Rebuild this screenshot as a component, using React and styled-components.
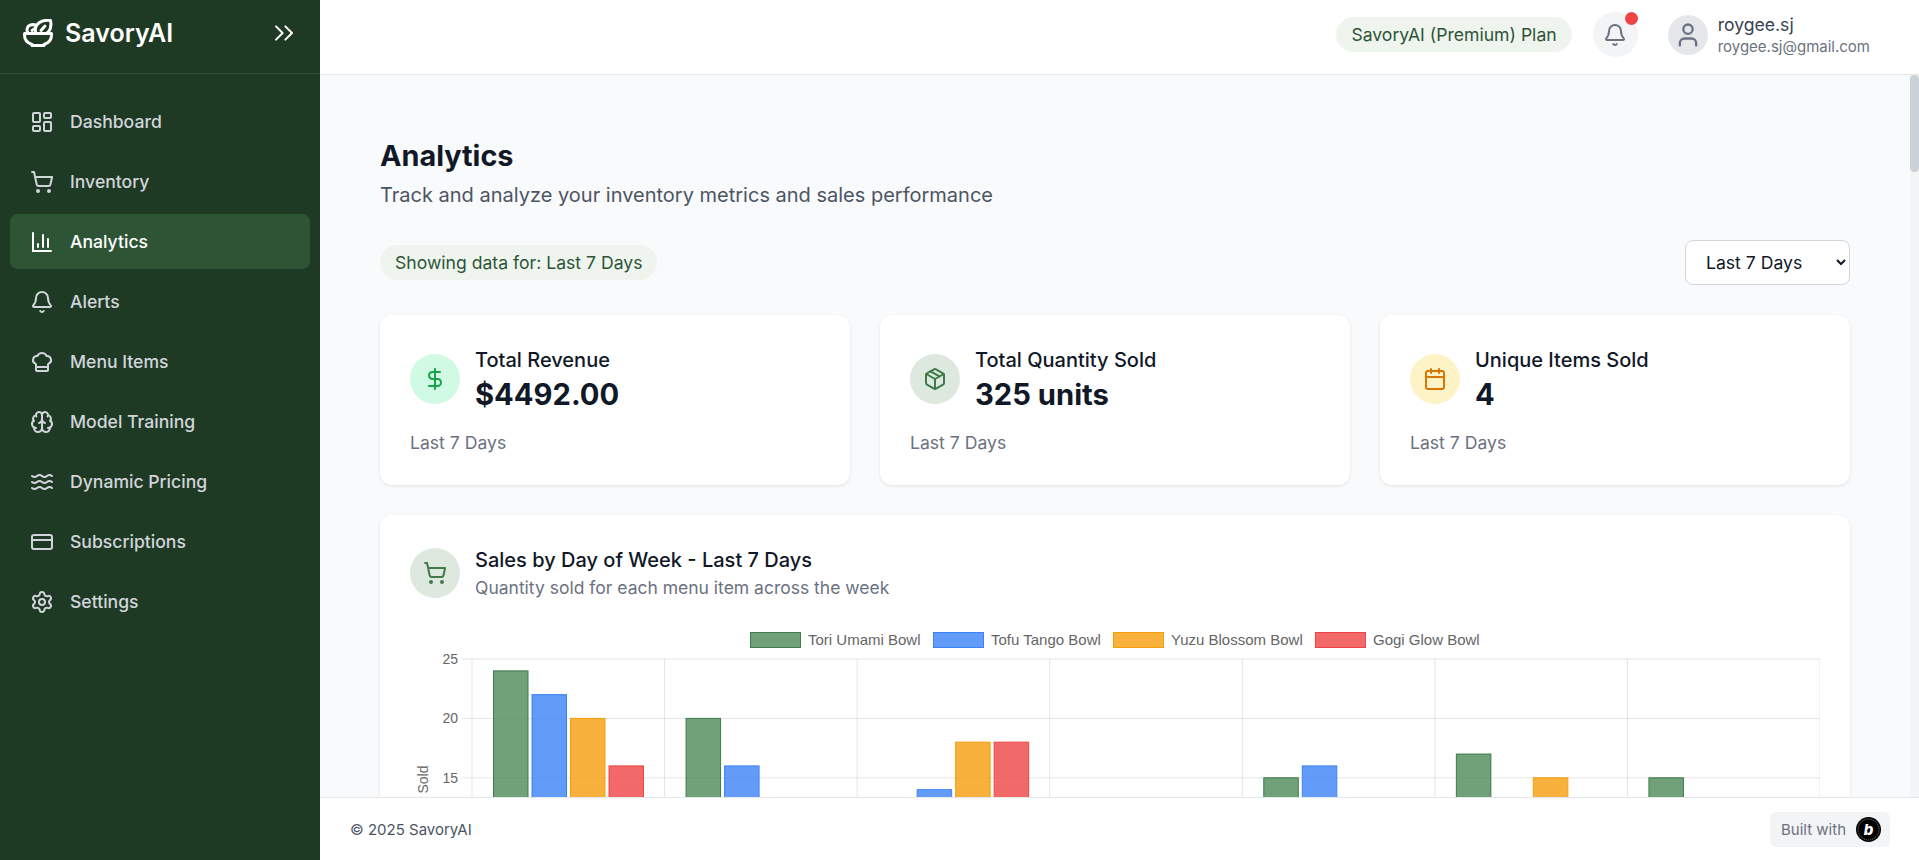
import styled, { createGlobalStyle } from "styled-components";
import {
  Bell,
  Brain,
  Calendar,
  ChefHat,
  ChevronsRight,
  CreditCard,
  DollarSign,
  LayoutDashboard,
  Package,
  Settings,
  ShoppingCart,
  User,
  Waves,
} from "lucide-react";

const GlobalStyle = createGlobalStyle`
  * {
    box-sizing: border-box;
  }
  html, body {
    margin: 0;
    height: 100%;
    overflow: hidden;
    font-family: Inter, "Liberation Sans", sans-serif;
    color: #111827;
  }
`;

const Shell = styled.div`
  display: flex;
  height: 100vh;
`;

const Sidebar = styled.aside`
  flex: 0 0 320px;
  background: #1f3a24;
  display: flex;
  flex-direction: column;
`;

const Brand = styled.div`
  height: 74px;
  flex: none;
  display: flex;
  align-items: center;
  padding: 0 20px 7px 23px;
  border-bottom: 1px solid #2d5535;
  color: #fff;
`;

const BrandName = styled.span`
  font-size: 25px;
  font-weight: 600;
  margin-left: 12px;
  flex: 1;
`;

const Nav = styled.nav`
  display: flex;
  flex-direction: column;
  gap: 5px;
  padding: 20px 10px;
`;

const NavItem = styled.a`
  height: 55px;
  display: flex;
  align-items: center;
  gap: 16px;
  padding: 0 20px;
  border-radius: 8px;
  font-size: 17.6px;
  font-weight: 500;
  color: ${(p) => (p.$active ? "#fff" : "#d1d5db")};
  background: ${(p) => (p.$active ? "#2d5535" : "transparent")};
`;

const Right = styled.div`
  flex: 1;
  min-width: 0;
  display: flex;
  flex-direction: column;
`;

const Topbar = styled.header`
  height: 75px;
  flex: none;
  background: #fff;
  border-bottom: 1px solid #e5e7eb;
  display: flex;
  align-items: center;
  justify-content: flex-end;
  padding: 0 49px 5px 0;
`;

const PlanPill = styled.div`
  height: 35px;
  padding: 0 15px;
  display: flex;
  align-items: center;
  border-radius: 18px;
  background: #eff4ef;
  color: #2d5535;
  font-size: 17.6px;
`;

const BellButton = styled.div`
  position: relative;
  width: 45px;
  height: 45px;
  margin: 0 30px 0 21px;
  border-radius: 50%;
  background: #f3f4f6;
  color: #6b7280;
  display: flex;
  align-items: center;
  justify-content: center;
`;

const RedDot = styled.span`
  position: absolute;
  top: 0;
  right: 0;
  width: 13px;
  height: 13px;
  border-radius: 50%;
  background: #ef4444;
`;

const Avatar = styled.div`
  width: 40px;
  height: 40px;
  border-radius: 50%;
  background: #e5e7eb;
  color: #6b7280;
  display: flex;
  align-items: center;
  justify-content: center;
  margin-right: 10px;
`;

const UserInfo = styled.div`
  display: flex;
  flex-direction: column;
  gap: 2px;
  padding-top: 3px;
`;

const UserName = styled.span`
  font-size: 17.6px;
  line-height: 20px;
  color: #374151;
`;

const UserEmail = styled.span`
  font-size: 15px;
  line-height: 20px;
  color: #6b7280;
`;

const MainRow = styled.div`
  flex: 1;
  min-height: 0;
  display: flex;
`;

const Main = styled.main`
  flex: 1;
  min-width: 0;
  overflow: hidden;
  background: #f9fafb;
`;

const ScrollRail = styled.div`
  flex: 0 0 9px;
  background: #f3f4f6;
`;

const ScrollThumb = styled.div`
  height: 97px;
  border-radius: 5px;
  background: #cbd0d9;
`;

const Content = styled.div`
  padding: 63px 60px 60px;
`;

const Title = styled.h1`
  margin: 0;
  font-size: 28.8px;
  line-height: 36px;
  font-weight: 700;
  color: #111827;
`;

const Subtitle = styled.p`
  margin: 7px 0 0;
  font-size: 20px;
  line-height: 28px;
  color: #4b5563;
`;

const Toolbar = styled.div`
  margin-top: 31px;
  display: flex;
  align-items: center;
  justify-content: space-between;
`;

const RangePill = styled.div`
  height: 35px;
  padding: 0 15px;
  display: flex;
  align-items: center;
  border-radius: 18px;
  background: #eff4ef;
  color: #2d5535;
  font-size: 17.6px;
`;

const RangeSelect = styled.select`
  width: 165px;
  height: 45px;
  padding: 0 16px;
  border: 1px solid #d1d5db;
  border-radius: 8px;
  background: #fff;
  color: #111827;
  font-family: inherit;
  font-size: 17.6px;
`;

const StatGrid = styled.div`
  margin-top: 30px;
  display: grid;
  grid-template-columns: repeat(3, 1fr);
  gap: 30px;
`;

const Card = styled.section`
  background: #fff;
  border-radius: 12px;
  padding: 30px;
  box-shadow: 0 1px 3px rgba(0, 0, 0, 0.1);
`;

const CardHead = styled.div`
  display: flex;
  align-items: center;
  gap: 15px;
`;

const IconCircle = styled.div`
  width: 50px;
  height: 50px;
  flex: none;
  border-radius: 50%;
  display: flex;
  align-items: center;
  justify-content: center;
  background: ${(p) => p.$bg};
  color: ${(p) => p.$fg};
`;

const StatLabel = styled.div`
  font-size: 20px;
  line-height: 28px;
  font-weight: 500;
  margin-top: 1px;
`;

const StatValue = styled.div`
  font-size: 29.2px;
  line-height: 36px;
  font-weight: 700;
  margin-top: 3px;
`;

const StatNote = styled.div`
  margin-top: 18px;
  font-size: 17.6px;
  line-height: 24px;
  color: #6b7280;
`;

const ChartCard = styled(Card)`
  margin-top: 30px;
`;

const ChartTitle = styled.div`
  font-size: 20px;
  line-height: 30px;
  font-weight: 500;
`;

const ChartSub = styled.div`
  font-size: 17.5px;
  line-height: 26px;
  color: #6b7280;
`;

const ChartSvg = styled.svg`
  display: block;
  margin-top: 20px;
`;

const Footer = styled.footer`
  height: 63px;
  flex: none;
  background: #fff;
  border-top: 1px solid #e5e7eb;
  display: flex;
  align-items: center;
  justify-content: space-between;
  padding: 1px 29px 0 30px;
  font-size: 15px;
  color: #4b5563;
`;

const BuiltWith = styled.div`
  height: 35px;
  padding: 0 9px 0 11px;
  display: flex;
  align-items: center;
  gap: 10px;
  border-radius: 6px;
  background: #f3f4f6;
  color: #6b7280;
`;

function BarsIcon(props) {
  return (
    <svg width="24" height="24" viewBox="0 0 24 24" fill="none" stroke="currentColor" strokeWidth="2" strokeLinecap="round" {...props}>
      <path d="M3 3v18h18" />
      <path d="M18 17V9" />
      <path d="M13 17V5" />
      <path d="M8 17v-3" />
    </svg>
  );
}

function BowlLogo() {
  return (
    <svg width="30" height="28" viewBox="0 0 30 28" fill="none" stroke="#fff" strokeWidth="3" strokeLinejoin="round" strokeLinecap="round" style={{ flex: "none" }}>
      <path d="M1.5 14.5h27v1.5c0 4.5-3 8-7.5 9.5v1H9v-1C4.5 24 1.5 20.5 1.5 16z" />
      <path d="M5 14c-2-3-1-7 2.5-8 2-.6 4-.4 5.5.4" />
      <path d="M13 14c-1.500-4 0-8 3.500-10.500 3-2 7-2.500 11-2 .8 4 .4 8-1.500 10.500-.6 1-1.300 1.500-2 2" />
      <path d="M9 11.5l3-2M18 11.5l4-4.5" />
    </svg>
  );
}

function BoltLogo() {
  return (
    <svg width="25" height="25" viewBox="0 0 25 25">
      <circle cx="12.5" cy="12.5" r="12.5" fill="#000" />
      <circle cx="12.5" cy="12.5" r="10.5" fill="none" stroke="#888" strokeWidth="1" strokeDasharray="1 1" />
      <text x="12.5" y="18" textAnchor="middle" fontFamily="Inter, sans-serif" fontSize="15" fontWeight="800" fontStyle="italic" fill="#fff">
        b
      </text>
    </svg>
  );
}

const navItems = [
  { label: "Dashboard", Icon: LayoutDashboard },
  { label: "Inventory", Icon: ShoppingCart },
  { label: "Analytics", Icon: BarsIcon, active: true },
  { label: "Alerts", Icon: Bell },
  { label: "Menu Items", Icon: ChefHat },
  { label: "Model Training", Icon: Brain },
  { label: "Dynamic Pricing", Icon: Waves },
  { label: "Subscriptions", Icon: CreditCard },
  { label: "Settings", Icon: Settings },
];

const stats = [
  { label: "Total Revenue", value: "$4492.00", Icon: DollarSign, bg: "#d1fae5", fg: "#16a34a" },
  { label: "Total Quantity Sold", value: "325 units", Icon: Package, bg: "#dde8df", fg: "#3f7a4a" },
  { label: "Unique Items Sold", value: "4", Icon: Calendar, bg: "#fef3c7", fg: "#d97706" },
];

const series = [
  { name: "Tori Umami Bowl", fill: "rgba(58,125,68,0.72)", line: "#3f7a4a", data: [24, 20, 0, 0, 15, 17, 15] },
  { name: "Tofu Tango Bowl", fill: "rgba(59,130,246,0.8)", line: "#3b82f6", data: [22, 16, 14, 0, 16, 0, 0] },
  { name: "Yuzu Blossom Bowl", fill: "rgba(245,158,11,0.8)", line: "#f59e0b", data: [20, 0, 18, 0, 0, 15, 0] },
  { name: "Gogi Glow Bowl", fill: "rgba(239,68,68,0.8)", line: "#ef4444", data: [16, 0, 18, 0, 0, 0, 0] },
];

const days = ["Mon", "Tue", "Wed", "Thu", "Fri", "Sat", "Sun"];

// plot geometry, in px from the top left of the svg
const CHART = { w: 1410, h: 400, left: 62, right: 1410, top: 38, unit: 11.88, bar: 34.5, step: 38.5, pad: 21.5 };

function SalesChart() {
  const { w, h, left, right, top, unit, bar, step, pad } = CHART;
  const groupW = (right - left) / 7;
  const y = (v) => top + (25 - v) * unit;
  const bottom = y(0);
  const legendX = [340, 523, 703, 905];

  return (
    <ChartSvg width={w} height={h} fontFamily='"Liberation Sans", Arial, sans-serif'>
      {series.map((s, i) => (
        <g key={s.name}>
          <rect x={legendX[i] + 0.5} y={11.5} width={50} height={15} fill={s.fill} stroke={s.line} />
          <text x={legendX[i] + 58} y={23.5} fontSize="15" fill="#666">
            {s.name}
          </text>
        </g>
      ))}
      {[25, 20, 15, 10, 5, 0].map((v) => (
        <g key={v}>
          <line x1={left - 10} x2={right} y1={y(v)} y2={y(v)} stroke="rgba(0,0,0,0.1)" />
          <text x={left - 14} y={y(v) + 5} fontSize="14" fill="#666" textAnchor="end">
            {v}
          </text>
        </g>
      ))}
      {[0, 1, 2, 3, 4, 5, 6, 7].map((i) => (
        <line key={i} x1={left + i * groupW} x2={left + i * groupW} y1={top} y2={bottom + 8} stroke="rgba(0,0,0,0.1)" />
      ))}
      {days.map((d, i) => (
        <text key={d} x={left + (i + 0.5) * groupW} y={bottom + 24} fontSize="14" fill="#666" textAnchor="middle">
          {d}
        </text>
      ))}
      {series.map((s, si) =>
        s.data.map((v, di) =>
          v ? (
            <rect
              key={di}
              x={left + di * groupW + pad + si * step}
              y={y(v)}
              width={bar}
              height={bottom - y(v)}
              fill={s.fill}
              stroke={s.line}
              strokeWidth="1"
            />
          ) : null
        )
      )}
      <text transform={`translate(18 ${y(12.5)}) rotate(-90)`} fontSize="14" fill="#666" textAnchor="middle">
        Quantity Sold
      </text>
    </ChartSvg>
  );
}

export default function App() {
  return (
    <>
      <GlobalStyle />
      <Shell>
        <Sidebar>
          <Brand>
            <BowlLogo />
            <BrandName>SavoryAI</BrandName>
            <ChevronsRight size={32} strokeWidth={1.5} />
          </Brand>
          <Nav>
            {navItems.map(({ label, Icon, active }) => (
              <NavItem key={label} $active={active}>
                <Icon size={24} />
                {label}
              </NavItem>
            ))}
          </Nav>
        </Sidebar>
        <Right>
          <Topbar>
            <PlanPill>SavoryAI (Premium) Plan</PlanPill>
            <BellButton>
              <Bell size={24} />
              <RedDot />
            </BellButton>
            <Avatar>
              <User size={28} />
            </Avatar>
            <UserInfo>
              <UserName>roygee.sj</UserName>
              <UserEmail>roygee.sj@gmail.com</UserEmail>
            </UserInfo>
          </Topbar>
          <MainRow>
            <Main>
              <Content>
                <Title>Analytics</Title>
                <Subtitle>Track and analyze your inventory metrics and sales performance</Subtitle>
                <Toolbar>
                  <RangePill>Showing data for: Last 7 Days</RangePill>
                  <RangeSelect defaultValue="7">
                    <option value="7">Last 7 Days</option>
                    <option value="30">Last 30 Days</option>
                  </RangeSelect>
                </Toolbar>
                <StatGrid>
                  {stats.map(({ label, value, Icon, bg, fg }) => (
                    <Card key={label}>
                      <CardHead>
                        <IconCircle $bg={bg} $fg={fg}>
                          <Icon size={24} />
                        </IconCircle>
                        <div>
                          <StatLabel>{label}</StatLabel>
                          <StatValue>{value}</StatValue>
                        </div>
                      </CardHead>
                      <StatNote>Last 7 Days</StatNote>
                    </Card>
                  ))}
                </StatGrid>
                <ChartCard>
                  <CardHead>
                    <IconCircle $bg="#dde8df" $fg="#3f7a4a">
                      <ShoppingCart size={24} />
                    </IconCircle>
                    <div>
                      <ChartTitle>Sales by Day of Week - Last 7 Days</ChartTitle>
                      <ChartSub>Quantity sold for each menu item across the week</ChartSub>
                    </div>
                  </CardHead>
                  <SalesChart />
                </ChartCard>
              </Content>
            </Main>
            <ScrollRail>
              <ScrollThumb />
            </ScrollRail>
          </MainRow>
          <Footer>
            <span>© 2025 SavoryAI</span>
            <BuiltWith>
              Built with
              <BoltLogo />
            </BuiltWith>
          </Footer>
        </Right>
      </Shell>
    </>
  );
}
